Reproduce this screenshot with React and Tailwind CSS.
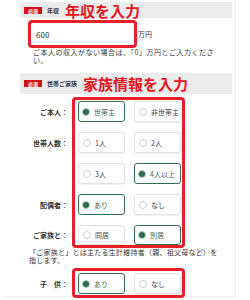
import React from "react";

function Radio({ selected }) {
  if (selected) {
    return (
      <span className="w-[8px] h-[8px] rounded-full border border-[#9cc2ae] flex items-center justify-center shrink-0">
        <span className="w-[6px] h-[6px] rounded-full bg-[#2e6b4e]" />
      </span>
    );
  }
  return <span className="w-[8px] h-[8px] rounded-full border border-[#d0d0d0] bg-white shrink-0" />;
}

function Opt({ label, selected, h = "h-[21px]" }) {
  return (
    <div
      className={
        selected
          ? `${h} rounded-[3px] border-[1.5px] border-[#2f6e50] bg-white flex items-center pl-[3px] gap-[4px] text-[7px] leading-[8px] text-[#3a5f4e]`
          : `${h} rounded-[3px] border border-[#e3e3e3] bg-white shadow-[0_1px_1px_rgba(0,0,0,0.06)] flex items-center pl-[4px] gap-[4px] text-[7px] leading-[8px] text-[#444]`
      }
    >
      <Radio selected={selected} />
      <span>{label}</span>
    </div>
  );
}

function Label({ children, h = "h-[21px]" }) {
  return (
    <div className={`${h} flex items-center justify-end pr-[2px] text-[7px] leading-[8px] font-bold text-[#333]`}>
      {children}
    </div>
  );
}

function Header({ small, big }) {
  return (
    <div className="ml-[17px] w-[212px] bg-[#ececec] flex items-center pl-[4px] h-full">
      <span className="w-[18px] h-[7px] bg-[#d0121b] text-white text-[5px] leading-[7px] font-bold flex items-center justify-center">
        必須
      </span>
      <span className="ml-[5px] text-[6px] leading-[7px] font-bold text-[#333]">{small}</span>
      <span className="ml-[6px] text-[15px] leading-[15px] font-bold text-[#e8141e]">{big}</span>
    </div>
  );
}

export default function App() {
  return (
    <div className="w-[250px] h-[300px] overflow-hidden bg-white font-['Noto_Sans_CJK_JP','Noto_Sans',sans-serif]">
      <div className="ml-[3px] w-[233px] h-[297px] bg-white border-r border-b border-[#eeeeee] pt-[2px]">
        <div className="h-[16px]">
          <Header small="年収" big="年収を入力" />
        </div>

        <div className="mt-[2px] ml-[25px] flex items-center">
          <div className="w-[109px] h-[28px] border-[3px] border-[#e8202a] rounded-[4px] bg-white flex items-center pl-[5px] text-[8px] leading-[9px] text-[#333]">
            600
          </div>
          <span className="ml-[1px] text-[7px] leading-[8px] text-[#333]">万円</span>
        </div>

        <div className="ml-[30px] w-[182px] text-[7px] leading-[8px] tracking-[0.5px] text-[#333]">
          ご本人の収入がない場合は、「0」万円とご入力ください。
        </div>

        <div className="mt-[9px] h-[21px]">
          <Header small="世帯ご家族" big="家族情報を入力" />
        </div>

        <div className="mt-[3px] flex">
          <div className="w-[67px] pt-[4px] flex flex-col gap-[10px]">
            <Label>ご本人：</Label>
            <Label>世帯人数：</Label>
            <div className="h-[21px]" />
            <Label>配偶者：</Label>
            <Label h="h-[20px]">ご家族と：</Label>
          </div>
          <div className="ml-[2px] border-[3px] border-[#e8202a] rounded-[4px] pl-[3px] pr-[1px] pt-[1px] grid grid-cols-[47px_47px] gap-x-[9px] gap-y-[10px]">
            <Opt label="世帯主" selected />
            <Opt label="非世帯主" />
            <Opt label="1人" />
            <Opt label="2人" />
            <Opt label="3人" />
            <Opt label="4人以上" selected />
            <Opt label="あり" selected />
            <Opt label="なし" />
            <Opt label="同居" h="h-[20px]" />
            <Opt label="別居" selected h="h-[20px]" />
          </div>
        </div>

        <div className="ml-[26px] w-[190px] text-[7px] leading-[8px] tracking-[0.25px] text-[#333]">
          「ご家族と」とは主たる生計維持者（親、祖父母など）を指します。
        </div>

        <div className="mt-[4px] flex">
          <div className="w-[67px] pt-[5px]">
            <Label>子　供：</Label>
          </div>
          <div className="ml-[2px] border-[3px] border-[#e8202a] rounded-[4px] pl-[3px] pr-[1px] pt-[2px] pb-[1px] grid grid-cols-[47px_47px] gap-x-[9px]">
            <Opt label="あり" selected />
            <Opt label="なし" />
          </div>
        </div>
      </div>
    </div>
  );
}
